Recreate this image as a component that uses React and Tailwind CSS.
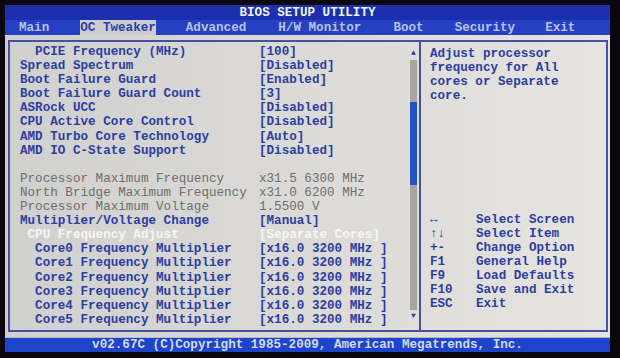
const mono = { fontFamily: '"Liberation Mono", "DejaVu Sans Mono", monospace' };

const menu = [
  { label: "Main", ml: "ml-[14px]" },
  { label: "OC Tweaker", ml: "ml-[31px]", active: true },
  { label: "Advanced", ml: "ml-[30px]" },
  { label: "H/W Monitor", ml: "ml-[32px]" },
  { label: "Boot", ml: "ml-[32px]" },
  { label: "Security", ml: "ml-[31px]" },
  { label: "Exit", ml: "ml-[30px]" },
];

// kind: blue = editable, gray = info, white = selected
const rows = [
  { label: "  PCIE Frequency (MHz)", value: "[100]", kind: "blue" },
  { label: "Spread Spectrum", value: "[Disabled]", kind: "blue" },
  { label: "Boot Failure Guard", value: "[Enabled]", kind: "blue" },
  { label: "Boot Failure Guard Count", value: "[3]", kind: "blue" },
  { label: "ASRock UCC", value: "[Disabled]", kind: "blue" },
  { label: "CPU Active Core Control", value: "[Disabled]", kind: "blue" },
  { label: "AMD Turbo Core Technology", value: "[Auto]", kind: "blue" },
  { label: "AMD IO C-State Support", value: "[Disabled]", kind: "blue" },
  { label: "", value: "", kind: "blue" },
  { label: "Processor Maximum Frequency", value: "x31.5 6300 MHz", kind: "gray" },
  { label: "North Bridge Maximum Frequency", value: "x31.0 6200 MHz", kind: "gray" },
  { label: "Processor Maximum Voltage", value: "1.5500 V", kind: "gray" },
  { label: "Multiplier/Voltage Change", value: "[Manual]", kind: "blue" },
  { label: " CPU Frequency Adjust", value: "[Separate Cores]", kind: "white" },
  { label: "  Core0 Frequency Multiplier", value: "[x16.0 3200 MHz ]", kind: "blue" },
  { label: "  Core1 Frequency Multiplier", value: "[x16.0 3200 MHz ]", kind: "blue" },
  { label: "  Core2 Frequency Multiplier", value: "[x16.0 3200 MHz ]", kind: "blue" },
  { label: "  Core3 Frequency Multiplier", value: "[x16.0 3200 MHz ]", kind: "blue" },
  { label: "  Core4 Frequency Multiplier", value: "[x16.0 3200 MHz ]", kind: "blue" },
  { label: "  Core5 Frequency Multiplier", value: "[x16.0 3200 MHz ]", kind: "blue" },
];

const kindClass = {
  blue: "text-[#2c3ea2] font-bold",
  gray: "text-[#6e6e6e]",
  white: "text-[#f6f6f6] font-bold",
};

const keys = [
  ["↔", "Select Screen"],
  ["↑↓", "Select Item"],
  ["+-", "Change Option"],
  ["F1", "General Help"],
  ["F9", "Load Defaults"],
  ["F10", "Save and Exit"],
  ["ESC", "Exit"],
];

function Scrollbar() {
  return (
    <div className="w-[7px] mr-[2px] flex flex-col items-center pt-[6px]">
      <span className="text-[8px] leading-[10px] text-[#2c3ea2]">▲</span>
      <div className="w-[7px] h-[42px] mt-[2px] bg-[#a8a49e]" />
      <div className="w-[7px] h-[83px] bg-[#2454c4]" />
      <div className="w-[7px] h-[125px] bg-[#a8a49e]" />
      <span className="text-[8px] leading-[10px] text-[#2c3ea2] mt-[1px]">▼</span>
    </div>
  );
}

export default function App() {
  return (
    <div
      className="w-[620px] h-[358px] bg-[#0c060e] pl-[5px] pr-[10px] pt-[5px] overflow-hidden text-[12.6px] leading-[14px]"
      style={mono}
    >
      <div className="flex flex-col">
        <div className="h-[15px] bg-[#1c30ae] flex items-center justify-center text-[#f2f2f6] font-bold">
          BIOS SETUP UTILITY
        </div>
        <div className="h-[15px] bg-[#2640c4] flex items-stretch text-[#b8c2e6] font-bold">
          {menu.map((m) => (
            <div
              key={m.label}
              className={`${m.ml} flex items-center whitespace-pre ${m.active ? "bg-[#ccccd2] text-[#2c3ea2]" : ""}`}
            >
              {m.label}
            </div>
          ))}
        </div>
        <div className="h-[302px] bg-gradient-to-r from-[#d0d0ce] to-[#e6e4e0] pl-[3px] pr-[2px] pt-[5px] pb-[5px]">
          <div className="h-full border-2 border-[#45519c] flex">
            <div className="w-[411px] flex border-r-2 border-[#45519c]">
              <div className="flex-1 pl-[10px] pt-[3px]">
                {rows.map((r, i) => (
                  <div
                    key={i}
                    className={`flex h-[14.1px] leading-[14.1px] whitespace-pre ${kindClass[r.kind]}`}
                  >
                    <span className="w-[239px]">{r.label}</span>
                    <span>{r.value}</span>
                  </div>
                ))}
              </div>
              <Scrollbar />
            </div>
            <div className="flex-1 pl-[9px] pt-[5px] pb-[19px] flex flex-col justify-between text-[#2c3ea2] font-bold">
              <div>
                <div>Adjust processor</div>
                <div>frequency for All</div>
                <div>cores or Separate</div>
                <div>core.</div>
              </div>
              <div>
                {keys.map(([k, d]) => (
                  <div key={d} className="flex h-[14px]">
                    <span className="w-[46px]">{k}</span>
                    <span>{d}</span>
                  </div>
                ))}
              </div>
            </div>
          </div>
        </div>
        <div className="h-[1px] bg-[#b8b8c0]" />
        <div className="h-[14px] bg-[#1f44cc] flex items-center justify-center text-[#d2daf2] font-bold">
          v02.67C (C)Copyright 1985-2009, American Megatrends, Inc.
        </div>
      </div>
    </div>
  );
}
